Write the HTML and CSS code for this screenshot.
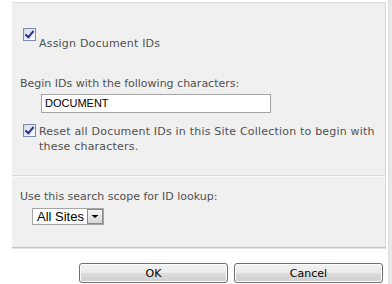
FILE: index.html
```html
<!DOCTYPE html>
<html lang="en">
<head>
    <meta charset="UTF-8">
    <title>Document ID Settings</title>
    <link rel="stylesheet" href="styles.css">
</head>
<body>
    <div class="frame">
        <div class="content">
            <div class="panel">
                <div class="section section-ids">
                    <div class="check-row assign">
                        <span class="checkbox checked"></span>
                        <span class="check-label">Assign Document IDs</span>
                    </div>

                    <div class="field-label begin">Begin IDs with the following characters:</div>
                    <div class="text-box">DOCUMENT</div>

                    <div class="check-row reset">
                        <span class="checkbox checked"></span>
                        <span class="check-label">Reset all Document IDs in this Site Collection to begin with these characters.</span>
                    </div>
                </div>

                <div class="section section-scope">
                    <div class="field-label">Use this search scope for ID lookup:</div>
                    <div class="select">
                        <span class="select-value">All Sites</span>
                        <span class="select-btn"></span>
                    </div>
                </div>
            </div>

            <div class="buttons">
                <button class="btn">OK</button>
                <button class="btn">Cancel</button>
            </div>
        </div>
        <div class="edge"></div>
    </div>
</body>
</html>
```

FILE: styles.css
```css
* {
    margin: 0;
    padding: 0;
    box-sizing: border-box;
}

body {
    font-family: "DejaVu Sans", Verdana, sans-serif;
    font-size: 11px;
    line-height: 15px;
    color: #505050;
    background: #fff;
    width: 392px;
    height: 284px;
    overflow: hidden;
}

.frame {
    display: flex;
    height: 284px;
}

.content {
    width: 386px;
    padding-left: 12px;
    padding-top: 2px;
}

.edge {
    width: 4px;
    margin-left: 2px;
    background: #e8e8e8;
    border-left: 1px solid #dedede;
}

.panel {
    background: #f0f0f0;
    border-top: 1px solid #dcdcdc;
    border-right: 1px solid #d6d6d6;
    border-bottom: 1px solid #c4c4c4;
    box-shadow: 0 1px 0 #e4e4e4;
}

.section-ids {
    height: 173px;
    padding: 25px 8px 0 11px;
    border-bottom: 1px solid #d8d8d8;
    box-shadow: 0 1px 0 #fafafa;
}

.section-scope {
    height: 71px;
    padding: 13px 8px 0 8px;
}

.check-row {
    display: flex;
    align-items: flex-start;
}

.check-row .check-label {
    margin-left: 3px;
    letter-spacing: 0.2px;
}

.assign .check-label {
    padding-top: 8px;
}

.reset {
    margin-top: 11px;
}

.checkbox {
    flex: none;
    width: 13px;
    height: 13px;
    border: 1px solid #7b8ab0;
    background: linear-gradient(135deg, #d6dae2 0%, #fbfbfb 100%);
    position: relative;
}

.checkbox.checked::after {
    content: "";
    position: absolute;
    left: 3px;
    top: 0px;
    width: 3px;
    height: 7px;
    border-right: 2px solid #23319b;
    border-bottom: 2px solid #23319b;
    transform: rotate(40deg);
}

.field-label.begin {
    margin-top: 25px;
    margin-left: -3px;
}

.text-box {
    width: 230px;
    height: 19px;
    margin: 3px 0 0 18px;
    border: 1px solid #a5a5a5;
    background: #fff;
    font-family: "Liberation Sans", Arial, sans-serif;
    font-size: 11px;
    line-height: 17px;
    color: #000;
    padding-left: 3px;
}

.select {
    display: flex;
    align-items: center;
    width: 72px;
    height: 17px;
    margin: 4px 0 0 12px;
    border: 1px solid #a5a5a5;
    background: #fff;
    font-family: "Liberation Sans", Arial, sans-serif;
    font-size: 13px;
    color: #000;
}

.select-value {
    flex: 1;
    padding-left: 4px;
    line-height: 15px;
}

.select-btn {
    width: 16px;
    height: 15px;
    border: 1px solid #8a8a8a;
    background: linear-gradient(#f4f4f4, #d8d8d8);
    position: relative;
}

.select-btn::after {
    content: "";
    position: absolute;
    left: 4px;
    top: 5px;
    border-left: 3px solid transparent;
    border-right: 3px solid transparent;
    border-top: 3px solid #000;
    width: 0;
    height: 0;
    transform: scaleX(1.2);
}

.buttons {
    display: flex;
    justify-content: flex-end;
    gap: 6px;
    margin-top: 15px;
    padding-right: 3px;
}

.btn {
    width: 149px;
    height: 20px;
    border: 1px solid #707070;
    border-radius: 3px;
    background: linear-gradient(#f2f2f2 0%, #ebebeb 50%, #dddddd 51%, #cfcfcf 100%);
    box-shadow: inset 0 0 0 1px #fcfcfc;
    font-family: "DejaVu Sans", Tahoma, sans-serif;
    font-size: 11px;
    color: #000;
}
```
